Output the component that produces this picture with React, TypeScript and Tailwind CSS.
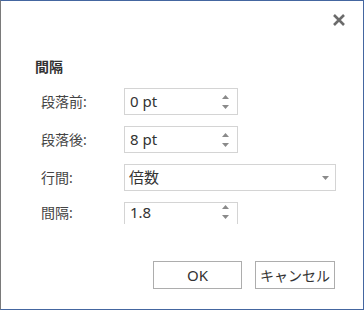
import React from 'react'

const font = { fontFamily: '"Noto Sans", "Noto Sans CJK JP", sans-serif' }

const Spinner = () => (
  <div className="flex flex-col items-center gap-[6px] pr-[8px]">
    <svg width="7" height="4" viewBox="0 0 7 4"><path d="M0 4 L3.5 0 L7 4 Z" fill="#8a8a8a" /></svg>
    <svg width="7" height="4" viewBox="0 0 7 4"><path d="M0 0 L3.5 4 L7 0 Z" fill="#8a8a8a" /></svg>
  </div>
)

const NumberField = ({ value, clipped }: { value: string; clipped?: boolean }) => (
  <div
    className={
      'w-[114px] flex items-center justify-between border border-[#d4d4d4] bg-white ' +
      (clipped ? 'h-[22px] border-b-0 items-start pt-[2px]' : 'h-[27px]')
    }
  >
    <span className="pl-[5px] text-[15px] text-[#333] leading-none">{value}</span>
    <Spinner />
  </div>
)

const Row = ({ label, children, h }: { label: string; children: React.ReactNode; h: string }) => (
  <div className={'flex items-center ' + h}>
    <div className="w-[89px] pl-[6px] text-[14px] text-[#444]">{label}</div>
    {children}
  </div>
)

export default function App() {
  return (
    <div style={font} className="w-[364px] h-[310px] bg-white border border-[#4466a0] border-l-[#7a7a7a] flex flex-col">
      <div className="flex justify-end pt-[12px] pr-[17px]">
        <svg width="14" height="14" viewBox="0 0 14 14">
          <path d="M2 2 L12 12 M12 2 L2 12" stroke="#6b6b6b" strokeWidth="2.6" />
        </svg>
      </div>

      <div className="pl-[34px] mt-[30px] flex flex-col">
        <h2 className="text-[14px] font-bold text-[#333] leading-[20px]">間隔</h2>

        <div className="mt-[11px] flex flex-col gap-[11px]">
          <Row label="段落前:" h="h-[27px]">
            <NumberField value="0 pt" />
          </Row>
          <Row label="段落後:" h="h-[27px]">
            <NumberField value="8 pt" />
          </Row>
          <Row label="行間:" h="h-[27px]">
            <div className="w-[212px] h-[27px] flex items-center justify-between border border-[#d4d4d4]">
              <span className="pl-[4px] text-[15px] text-[#333] leading-none">倍数</span>
              <svg width="7" height="4" viewBox="0 0 7 4" className="mr-[6px]">
                <path d="M0 0 L3.5 4 L7 0 Z" fill="#8a8a8a" />
              </svg>
            </div>
          </Row>
          <Row label="間隔:" h="h-[22px] items-start">
            <NumberField value="1.8" clipped />
          </Row>
        </div>
      </div>

      <div className="mt-[37px] flex justify-end gap-[13px] pr-[28px]">
        <button className="w-[89px] h-[28px] border border-[#adadad] bg-white text-[15px] text-[#333]">OK</button>
        <button className="w-[80px] h-[28px] border border-[#adadad] bg-white text-[14px] text-[#333]">キャンセル</button>
      </div>
    </div>
  )
}
